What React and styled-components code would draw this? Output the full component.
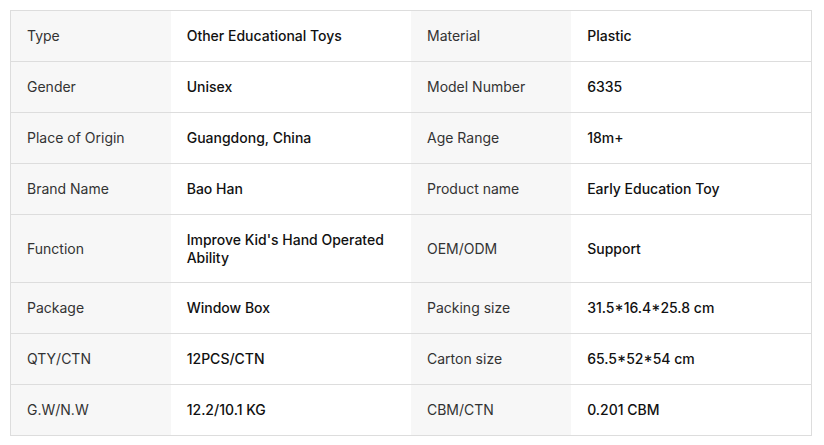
import React from "react";
import styled, { createGlobalStyle } from "styled-components";

const specs = [
  ["Type", "Other Educational Toys", "Material", "Plastic"],
  ["Gender", "Unisex", "Model Number", "6335"],
  ["Place of Origin", "Guangdong, China", "Age Range", "18m+"],
  ["Brand Name", "Bao Han", "Product name", "Early Education Toy"],
  ["Function", "Improve Kid's Hand Operated Ability", "OEM/ODM", "Support"],
  ["Package", "Window Box", "Packing size", "31.5*16.4*25.8 cm"],
  ["QTY/CTN", "12PCS/CTN", "Carton size", "65.5*52*54 cm"],
  ["G.W/N.W", "12.2/10.1 KG", "CBM/CTN", "0.201 CBM"],
];

export default function App() {
  return (
    <>
      <GlobalStyle />
      <Page>
        <SpecTable>
          <colgroup>
            <Col $w={160} />
            <Col $w={240} />
            <Col $w={160} />
            <Col $w={240} />
          </colgroup>
          <tbody>
            {specs.map(([l1, v1, l2, v2]) => (
              <Row key={l1}>
                <Label>{l1}</Label>
                <Value>{v1}</Value>
                <Label>{l2}</Label>
                <Value>{v2}</Value>
              </Row>
            ))}
          </tbody>
        </SpecTable>
      </Page>
    </>
  );
}

const GlobalStyle = createGlobalStyle`
  body {
    margin: 0;
    background: #fff;
    font-family: Inter, "Noto Sans", sans-serif;
  }
`;

const Page = styled.div`
  padding: 10px;
`;

const SpecTable = styled.table`
  width: 802px;
  border-collapse: collapse;
  table-layout: fixed;
  border: 1px solid #dddddd;
`;

const Col = styled.col`
  width: ${({ $w }) => $w}px;
`;

const Row = styled.tr`
  border-bottom: 1px solid #dddddd;
`;

const Cell = styled.td`
  height: 51px;
  box-sizing: border-box;
  padding: 16px;
  font-size: 14px;
  line-height: 17.5px;
  vertical-align: middle;
  text-align: left;
`;

const Label = styled(Cell)`
  background: #f7f7f7;
  color: #333333;
  font-weight: 400;
`;

const Value = styled(Cell)`
  background: #ffffff;
  color: #111111;
  font-weight: 450;
`;
